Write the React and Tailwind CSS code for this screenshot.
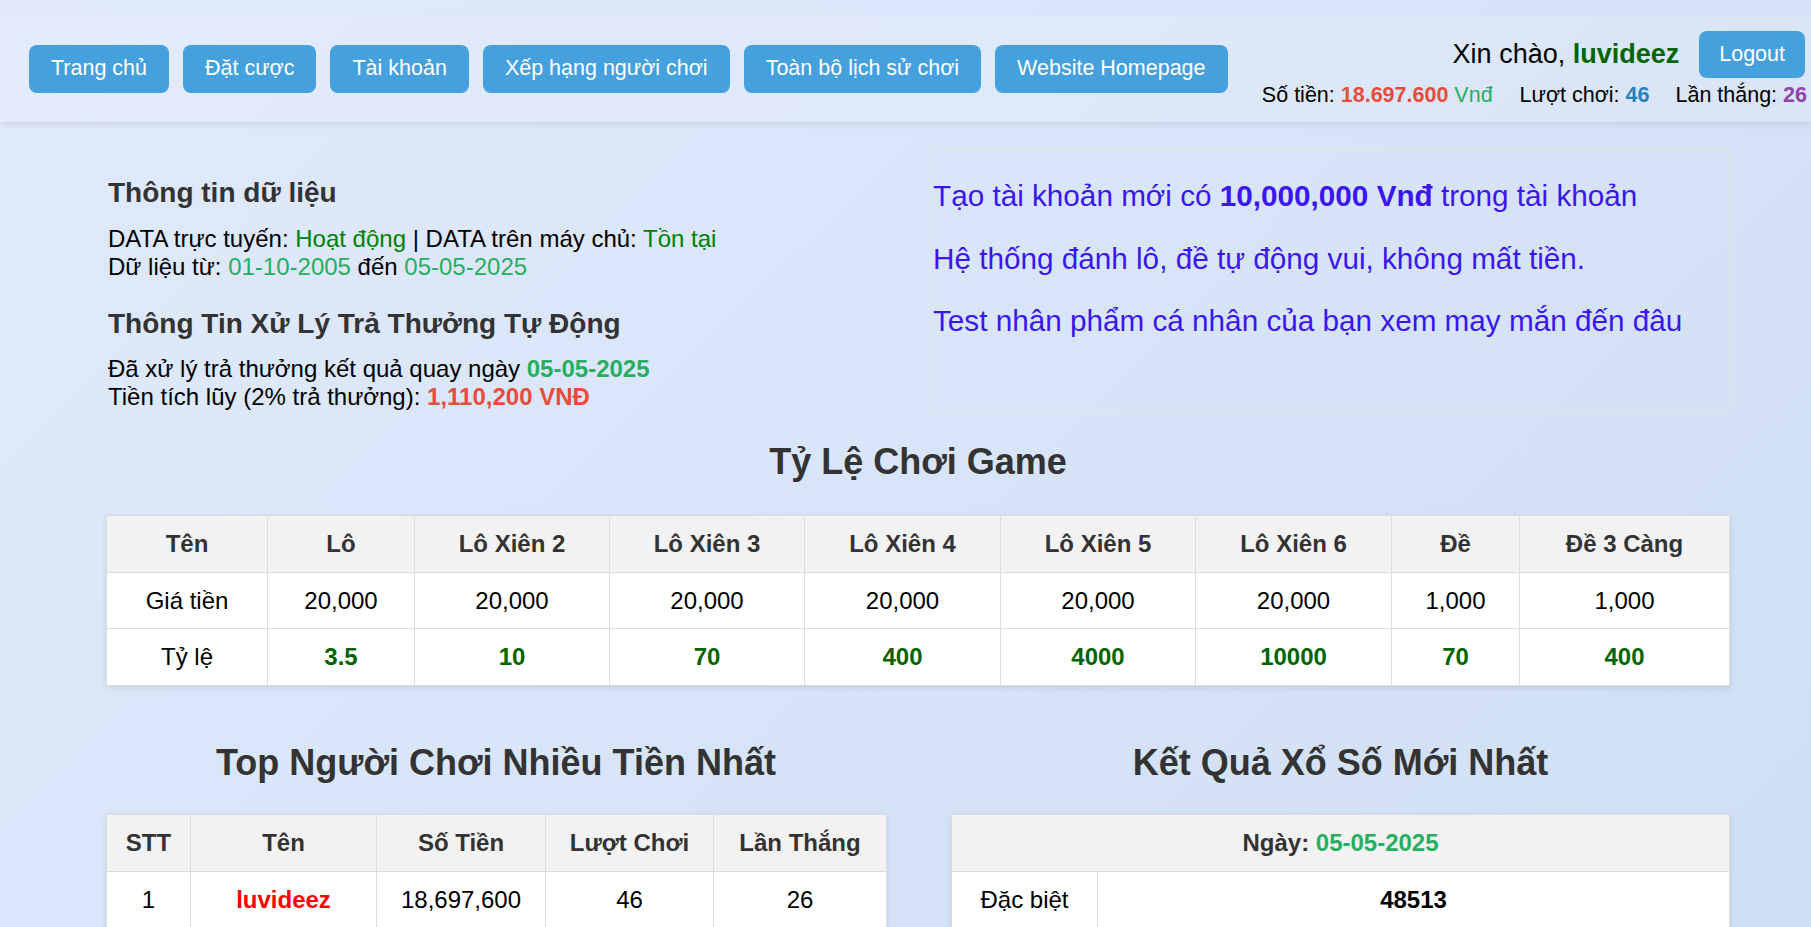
/**
 * App.jsx
 * Lottery game dashboard: nav header, data info, rates table,
 * top players and latest results.
 */

const NAV_LINKS = [
  'Trang chủ',
  'Đặt cược',
  'Tài khoản',
  'Xếp hạng người chơi',
  'Toàn bộ lịch sử chơi',
  'Website Homepage',
];

// Rates table columns: label, price, odds, column width
const RATES = [
  { name: 'Lô', price: '20,000', odds: '3.5', w: 'w-[147px]' },
  { name: 'Lô Xiên 2', price: '20,000', odds: '10', w: 'w-[195px]' },
  { name: 'Lô Xiên 3', price: '20,000', odds: '70', w: 'w-[195px]' },
  { name: 'Lô Xiên 4', price: '20,000', odds: '400', w: 'w-[196px]' },
  { name: 'Lô Xiên 5', price: '20,000', odds: '4000', w: 'w-[195px]' },
  { name: 'Lô Xiên 6', price: '20,000', odds: '10000', w: 'w-[196px]' },
  { name: 'Đề', price: '1,000', odds: '70', w: 'w-[128px]' },
  { name: 'Đề 3 Càng', price: '1,000', odds: '400', w: 'w-[210px]' },
];

const PLAYERS = [
  { stt: 1, name: 'luvideez', money: '18,697,600', plays: 46, wins: 26 },
];

const RESULTS = [
  { prize: 'Đặc biệt', nums: '48513', bold: true },
  { prize: 'Giải nhất', nums: '20675' },
  { prize: 'Giải nhì', nums: '81354 - 39026' },
  { prize: 'Giải ba', nums: '50142 - 71638 - 09457 - 62310 - 38804 - 95271' },
];

const th = 'border border-[#dddddd] bg-[#f2f2f2] py-[14px] px-2 font-bold text-[#333333] text-center';
const td = 'border border-[#dddddd] bg-white py-[14px] px-2 text-center';

function Header() {
  return (
    <div className="h-[107px] flex items-center justify-between pl-[29px] pr-[6px] bg-white/10 shadow-[0_3px_6px_rgba(0,0,0,0.08)]">
      {/* nav buttons */}
      <div className="flex items-center gap-[14px]">
        {NAV_LINKS.map((label) => (
          <button
            key={label}
            className="h-[48px] px-[22px] rounded-lg bg-[#45a0de] text-white text-[21.5px] whitespace-nowrap"
          >
            {label}
          </button>
        ))}
      </div>

      {/* greeting + stats */}
      <div className="flex flex-col items-end pt-[2px]">
        <div className="flex items-center gap-[20px]">
          <span className="text-[27px] text-black">
            Xin chào, <b className="text-[#006400]">luvideez</b>
          </span>
          <button className="h-[47px] px-[20px] rounded-lg bg-[#45a0de] text-white text-[21.5px]">
            Logout
          </button>
        </div>
        <div className="mt-[5px] -mr-[2px] text-[21.5px] text-black whitespace-nowrap">
          <span>
            Số tiền: <b className="text-[#e74c3c]">18.697.600</b>{' '}
            <span className="text-[#27ae60]">Vnđ</span>
          </span>
          <span className="ml-[27px]">
            Lượt chơi: <b className="text-[#2980b9]">46</b>
          </span>
          <span className="ml-[26px]">
            Lần thắng: <b className="text-[#8e44ad]">26</b>
          </span>
        </div>
      </div>
    </div>
  );
}

function InfoSection() {
  return (
    <div className="flex items-stretch mt-[28px]">
      {/* left: data info */}
      <div className="flex-1 pt-[27px] pl-[2px] text-[24px] text-black">
        <h3 className="text-[28px] font-bold text-[#333333]">Thông tin dữ liệu</h3>
        <div className="mt-[16px]">
          DATA trực tuyến: <span className="text-[#008000]">Hoạt động</span> | DATA trên máy chủ:{' '}
          <span className="text-[#008000]">Tồn tại</span>
        </div>
        <div>
          Dữ liệu từ: <span className="text-[#27ae60]">01-10-2005</span> đến{' '}
          <span className="text-[#27ae60]">05-05-2025</span>
        </div>
        <h3 className="mt-[28px] text-[28px] font-bold text-[#333333]">
          Thông Tin Xử Lý Trả Thưởng Tự Động
        </h3>
        <div className="mt-[14px]">
          Đã xử lý trả thưởng kết quả quay ngày <b className="text-[#27ae60]">05-05-2025</b>
        </div>
        <div className="mt-[1px]">
          Tiền tích lũy (2% trả thưởng): <b className="text-[#e74c3c]">1,110,200 VNĐ</b>
        </div>
      </div>

      {/* right: promo box */}
      <div className="w-[798px] border border-[#e2e4ea] pt-[28px] pb-[70px] flex flex-col gap-[28.5px] text-[29.7px] text-[#3a17f0]">
        <p>
          Tạo tài khoản mới có <b>10,000,000 Vnđ</b> trong tài khoản
        </p>
        <p>Hệ thống đánh lô, đề tự động vui, không mất tiền.</p>
        <p>Test nhân phẩm cá nhân của bạn xem may mắn đến đâu</p>
      </div>
    </div>
  );
}

function RatesTable() {
  return (
    <div className="mt-[30px]">
      <h2 className="text-center text-[36px] font-bold text-[#333333]">Tỷ Lệ Chơi Game</h2>
      <table className="mt-[33px] w-full table-fixed border-collapse text-[24px] shadow-[0_2px_6px_rgba(0,0,0,0.1)]">
        <thead>
          <tr>
            <th className={`${th} w-[161px]`}>Tên</th>
            {RATES.map((r) => (
              <th key={r.name} className={`${th} ${r.w}`}>
                {r.name}
              </th>
            ))}
          </tr>
        </thead>
        <tbody>
          <tr>
            <td className={td}>Giá tiền</td>
            {RATES.map((r) => (
              <td key={r.name} className={td}>
                {r.price}
              </td>
            ))}
          </tr>
          <tr>
            <td className={td}>Tỷ lệ</td>
            {RATES.map((r) => (
              <td key={r.name} className={`${td} font-bold text-[#006400]`}>
                {r.odds}
              </td>
            ))}
          </tr>
        </tbody>
      </table>
    </div>
  );
}

function TopPlayers() {
  return (
    <div className="w-[780px]">
      <h2 className="text-center text-[36px] font-bold text-[#333333]">Top Người Chơi Nhiều Tiền Nhất</h2>
      <table className="mt-[31px] w-full table-fixed border-collapse text-[24px] shadow-[0_2px_6px_rgba(0,0,0,0.1)]">
        <thead>
          <tr>
            <th className={`${th} w-[84px]`}>STT</th>
            <th className={`${th} w-[186px]`}>Tên</th>
            <th className={`${th} w-[169px]`}>Số Tiền</th>
            <th className={`${th} w-[168px]`}>Lượt Chơi</th>
            <th className={`${th} w-[173px]`}>Lần Thắng</th>
          </tr>
        </thead>
        <tbody>
          {PLAYERS.map((p) => (
            <tr key={p.stt}>
              <td className={td}>{p.stt}</td>
              <td className={`${td} font-bold text-[#ff0000]`}>{p.name}</td>
              <td className={td}>{p.money}</td>
              <td className={td}>{p.plays}</td>
              <td className={td}>{p.wins}</td>
            </tr>
          ))}
        </tbody>
      </table>
    </div>
  );
}

function LatestResults() {
  return (
    <div className="w-[779px]">
      <h2 className="text-center text-[36px] font-bold text-[#333333]">Kết Quả Xổ Số Mới Nhất</h2>
      <table className="mt-[31px] w-full table-fixed border-collapse text-[24px] shadow-[0_2px_6px_rgba(0,0,0,0.1)]">
        <colgroup>
          <col className="w-[146px]" />
          <col />
        </colgroup>
        <thead>
          <tr>
            <th colSpan={2} className={th}>
              Ngày: <span className="text-[#27ae60]">05-05-2025</span>
            </th>
          </tr>
        </thead>
        <tbody>
          {RESULTS.map((r) => (
            <tr key={r.prize}>
              <td className={td}>{r.prize}</td>
              <td className={`${td} ${r.bold ? 'font-bold' : ''}`}>{r.nums}</td>
            </tr>
          ))}
        </tbody>
      </table>
    </div>
  );
}

export default function App() {
  return (
    <div className="min-h-screen pt-[15px] pb-10 bg-[linear-gradient(135deg,#e0eafc,#cfdef3)] font-['Liberation_Sans',Arial,sans-serif] leading-[1.15]">
      <Header />
      <div className="ml-[106px] w-[1624px]">
        <InfoSection />
        <RatesTable />
        <div className="mt-[56px] flex justify-between">
          <TopPlayers />
          <LatestResults />
        </div>
      </div>
    </div>
  );
}
